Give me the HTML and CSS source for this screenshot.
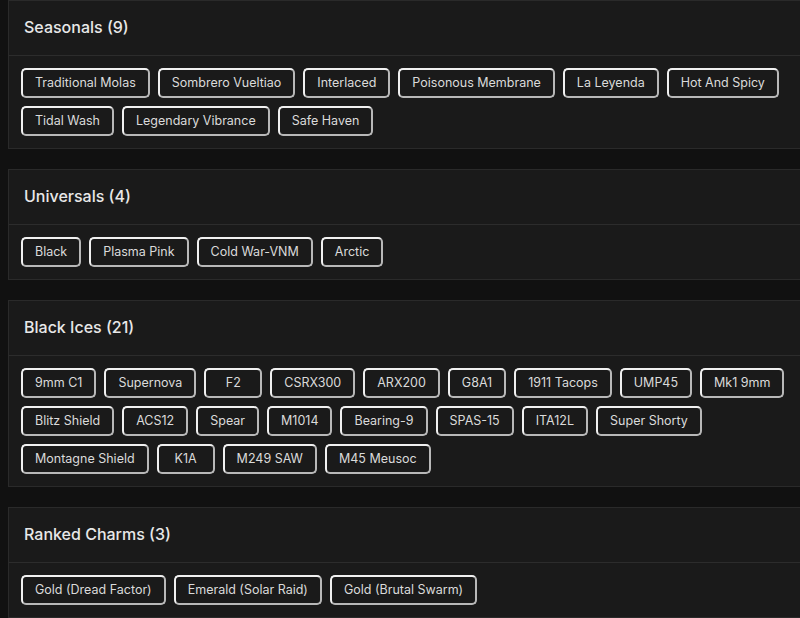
FILE: index.html
```html
<!DOCTYPE html>
<html lang="en">
<head>
<meta charset="utf-8">
<title>Skins</title>
<link rel="stylesheet" href="styles.css">
</head>
<body>
<div class="page">
  <section class="card">
    <div class="card-head">Seasonals (9)</div>
    <div class="chips">
      <span class="chip">Traditional Molas</span>
      <span class="chip">Sombrero Vueltiao</span>
      <span class="chip">Interlaced</span>
      <span class="chip">Poisonous Membrane</span>
      <span class="chip">La Leyenda</span>
      <span class="chip">Hot And Spicy</span>
      <span class="chip">Tidal Wash</span>
      <span class="chip">Legendary Vibrance</span>
      <span class="chip">Safe Haven</span>
    </div>
  </section>
  <section class="card">
    <div class="card-head">Universals (4)</div>
    <div class="chips">
      <span class="chip">Black</span>
      <span class="chip">Plasma Pink</span>
      <span class="chip">Cold War-VNM</span>
      <span class="chip">Arctic</span>
    </div>
  </section>
  <section class="card">
    <div class="card-head">Black Ices (21)</div>
    <div class="chips">
      <span class="chip">9mm C1</span>
      <span class="chip">Supernova</span>
      <span class="chip">F2</span>
      <span class="chip">CSRX300</span>
      <span class="chip">ARX200</span>
      <span class="chip">G8A1</span>
      <span class="chip">1911 Tacops</span>
      <span class="chip">UMP45</span>
      <span class="chip">Mk1 9mm</span>
      <span class="chip">Blitz Shield</span>
      <span class="chip">ACS12</span>
      <span class="chip">Spear</span>
      <span class="chip">M1014</span>
      <span class="chip">Bearing-9</span>
      <span class="chip">SPAS-15</span>
      <span class="chip">ITA12L</span>
      <span class="chip">Super Shorty</span>
      <span class="chip">Montagne Shield</span>
      <span class="chip">K1A</span>
      <span class="chip">M249 SAW</span>
      <span class="chip">M45 Meusoc</span>
    </div>
  </section>
  <section class="card">
    <div class="card-head">Ranked Charms (3)</div>
    <div class="chips">
      <span class="chip">Gold (Dread Factor)</span>
      <span class="chip">Emerald (Solar Raid)</span>
      <span class="chip">Gold (Brutal Swarm)</span>
    </div>
  </section>
</div>
</body>
</html>
```
FILE: styles.css
```css
html, body {
  margin: 0;
  padding: 0;
  background: #111111;
  overflow: hidden;
}
body {
  font-family: Inter, "Noto Sans", sans-serif;
  color: #e4e4e4;
}
.page {
  padding-left: 8px;
  margin-right: -40px;
}
.card {
  background: #1a1a1a;
  border: 1px solid #2a2a2a;
  margin-bottom: 20px;
}
.card-head {
  box-sizing: border-box;
  height: 55px;
  display: flex;
  align-items: center;
  padding: 0 15px 2px;
  font-size: 16px;
  font-weight: 500;
  color: #e8e8e8;
  border-bottom: 1px solid #2c2c2c;
}
.chips {
  display: flex;
  flex-wrap: wrap;
  gap: 8px;
  padding: 12px;
  max-width: 790px;
}
.chip {
  box-sizing: border-box;
  height: 30px;
  min-width: 58px;
  display: inline-flex;
  align-items: center;
  justify-content: center;
  padding: 0 12px 1px;
  border: 2px solid #f0f0f0;
  border-right-color: #b8b8b8;
  border-bottom-color: #b8b8b8;
  border-radius: 5px;
  font-size: 12.5px;
  color: #dadada;
  white-space: nowrap;
}
```
